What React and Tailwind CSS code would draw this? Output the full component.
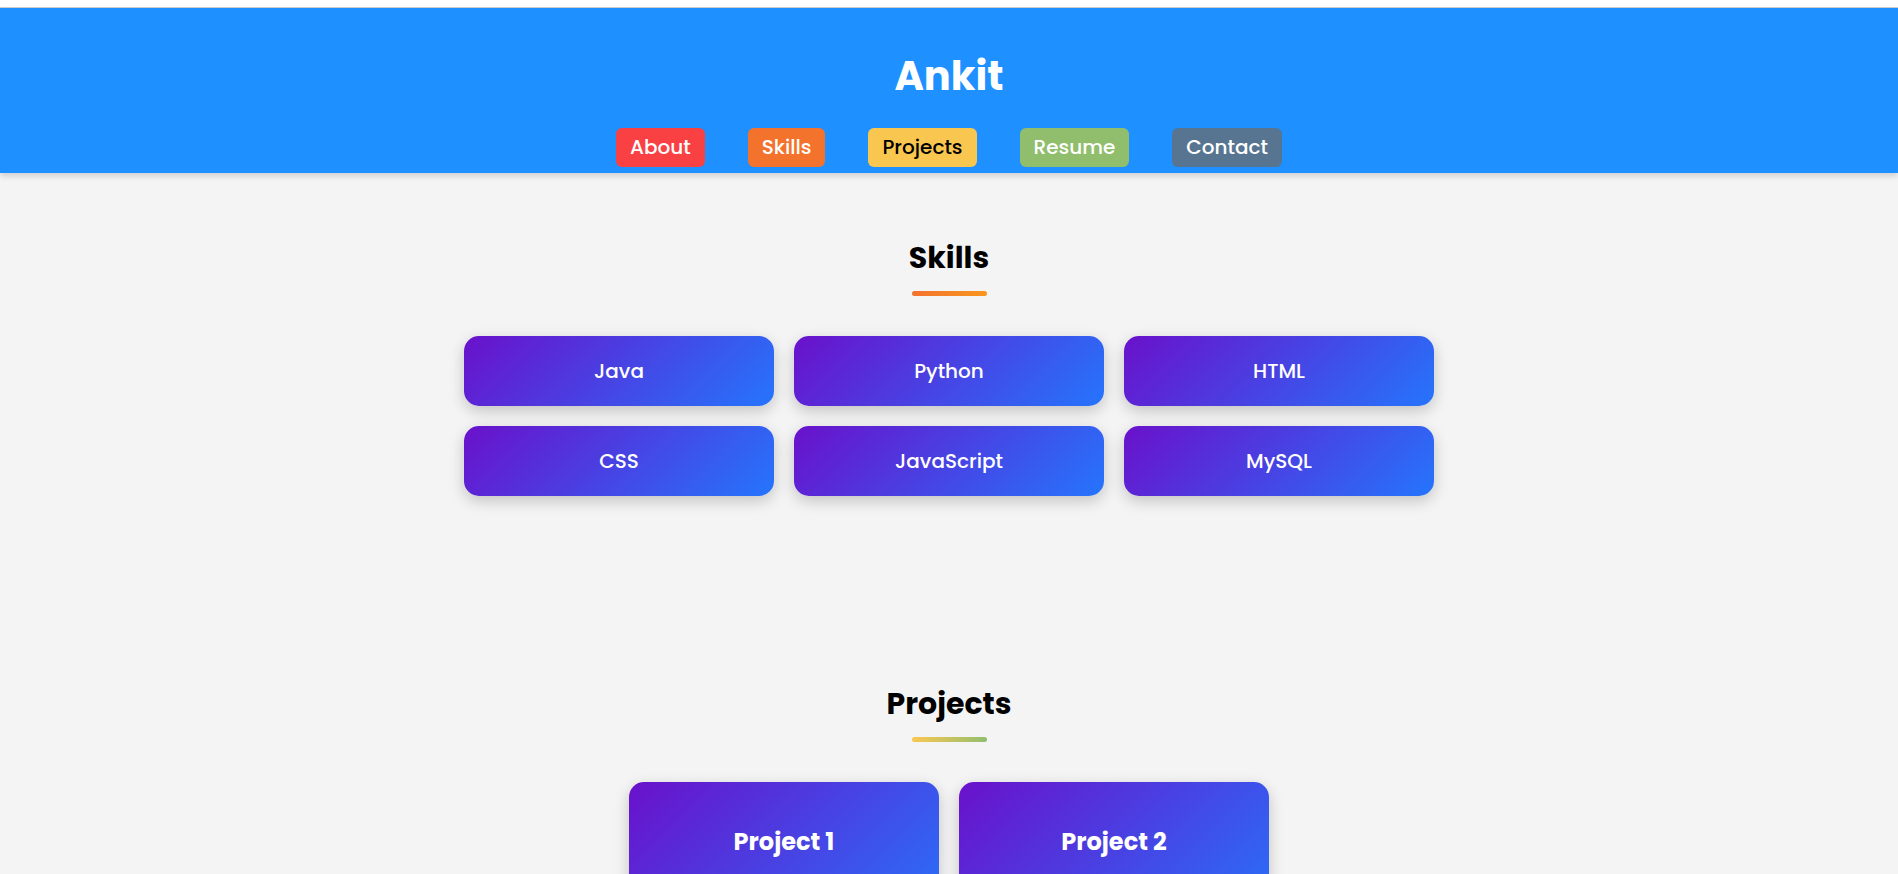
import React from "react";

const skills = ["Java", "Python", "HTML", "CSS", "JavaScript", "MySQL"];
const projects = ["Project 1", "Project 2"];

const nav = [
  { label: "About", cls: "bg-[#f94144] text-white" },
  { label: "Skills", cls: "bg-[#f3722c] text-white" },
  { label: "Projects", cls: "bg-[#f9c74f] text-black" },
  { label: "Resume", cls: "bg-[#90be6d] text-white" },
  { label: "Contact", cls: "bg-[#577590] text-white" },
];

function SectionTitle({ children, bar }) {
  return (
    <div className="flex flex-col items-center">
      <h2 className="h-[45px] leading-[45px] text-[30px] font-bold text-black">{children}</h2>
      <div className={`mt-[11px] h-[5px] w-[75px] rounded-full ${bar}`} />
    </div>
  );
}

export default function App() {
  return (
    <div className="min-h-screen bg-[#f4f4f4] font-['Poppins','Open_Sans',sans-serif]">
      {/* top strip */}
      <div className="h-[8px] bg-white border-b border-[#cfcfcf]" />

      {/* header */}
      <header className="bg-[#1e90ff] flex flex-col items-center pt-[38px] pb-[6px] shadow-[0_3px_6px_rgba(0,0,0,0.15)] relative z-10">
        <h1 className="h-[60px] leading-[60px] text-[40px] font-bold text-white">Ankit</h1>
        <nav className="mt-[22px] flex gap-[43px]">
          {nav.map((n) => (
            <a
              key={n.label}
              href="#"
              className={`h-[39px] leading-[39px] px-[14px] rounded-[6px] text-[20px] font-medium ${n.cls}`}
            >
              {n.label}
            </a>
          ))}
        </nav>
      </header>

      {/* skills */}
      <section className="pt-[62px]">
        <SectionTitle bar="bg-gradient-to-r from-[#f3722c] to-[#f8961e]">Skills</SectionTitle>
        <div className="mt-[40px] mx-auto max-w-[1000px] flex flex-wrap justify-center gap-5">
          {skills.map((s) => (
            <div
              key={s}
              className="w-[310px] h-[70px] rounded-[15px] bg-[linear-gradient(135deg,#6a11cb,#2575fc)] shadow-[0_5px_15px_rgba(0,0,0,0.2)] flex items-center justify-center text-white text-[20px] font-medium"
            >
              {s}
            </div>
          ))}
        </div>
      </section>

      {/* projects */}
      <section className="pt-[185px]">
        <SectionTitle bar="bg-gradient-to-r from-[#f9c74f] to-[#90be6d]">Projects</SectionTitle>
        <div className="mt-[40px] mx-auto max-w-[1000px] flex flex-wrap justify-center gap-5 pb-10">
          {projects.map((p) => (
            <div
              key={p}
              className="w-[310px] rounded-[15px] bg-[linear-gradient(135deg,#6a11cb,#2575fc)] shadow-[0_5px_15px_rgba(0,0,0,0.2)] pt-[42px] pb-[80px] flex flex-col items-center text-white"
            >
              <h3 className="h-[36px] leading-[36px] text-[24px] font-bold">{p}</h3>
            </div>
          ))}
        </div>
      </section>
    </div>
  );
}
